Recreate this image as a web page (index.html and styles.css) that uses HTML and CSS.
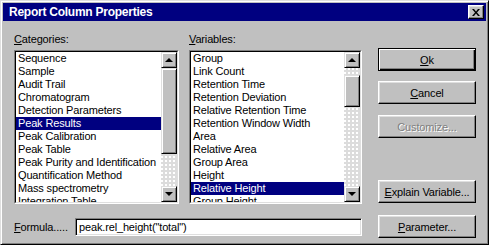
FILE: index.html
```html
<!DOCTYPE html>
<html>
<head>
<meta charset="utf-8">
<link rel="stylesheet" href="styles.css">
</head>
<body>
<div class="window">
  <div class="titlebar">
    <span class="title">Report Column Properties</span>
    <span class="close"><svg width="8" height="7" viewBox="0 0 8 7"><path d="M0 0h2l2 2.5L6 0h2L5 3.5 8 7H6L4 4.5 2 7H0l3-3.5z" fill="#000"/></svg></span>
  </div>
  <div class="main">
    <div class="panes">
      <div class="lists">
        <div class="group cat">
          <div class="label"><u>C</u>ategories:</div>
          <div class="listbox"><div class="lb-inner">
            <div class="items">
              <div class="item">Sequence</div>
              <div class="item">Sample</div>
              <div class="item">Audit Trail</div>
              <div class="item">Chromatogram</div>
              <div class="item">Detection Parameters</div>
              <div class="item sel">Peak Results</div>
              <div class="item">Peak Calibration</div>
              <div class="item">Peak Table</div>
              <div class="item">Peak Purity and Identification</div>
              <div class="item">Quantification Method</div>
              <div class="item">Mass spectrometry</div>
              <div class="item">Integration Table</div>
            </div>
            <div class="scrollbar">
              <div class="sbtn"><span class="arrow up"></span></div>
              <div class="thumb cat-thumb"></div>
              <div class="track"></div>
              <div class="sbtn"><span class="arrow down"></span></div>
            </div>
          </div></div>
        </div>
        <div class="group var">
          <div class="label"><u>V</u>ariables:</div>
          <div class="listbox"><div class="lb-inner">
            <div class="items">
              <div class="item">Group</div>
              <div class="item">Link Count</div>
              <div class="item">Retention Time</div>
              <div class="item">Retention Deviation</div>
              <div class="item">Relative Retention Time</div>
              <div class="item">Retention Window Width</div>
              <div class="item">Area</div>
              <div class="item">Relative Area</div>
              <div class="item">Group Area</div>
              <div class="item">Height</div>
              <div class="item sel">Relative Height</div>
              <div class="item">Group Height</div>
            </div>
            <div class="scrollbar">
              <div class="sbtn"><span class="arrow up"></span></div>
              <div class="track pre"></div>
              <div class="thumb var-thumb"></div>
              <div class="track"></div>
              <div class="sbtn"><span class="arrow down"></span></div>
            </div>
          </div></div>
        </div>
      </div>
      <div class="formula">
        <span class="flabel"><u>F</u>ormula.....</span>
        <div class="input">peak.rel_height("total")</div>
      </div>
    </div>
    <div class="buttons">
      <div class="btn default"><span><u>O</u>k</span></div>
      <div class="btn b-cancel"><span><u>C</u>ancel</span></div>
      <div class="btn b-cust disabled"><span>Customize...</span></div>
      <div class="btn b-explain"><span><u>E</u>xplain Variable...</span></div>
      <div class="btn b-param"><span><u>P</u>arameter...</span></div>
    </div>
  </div>
</div>
</body>
</html>
```
FILE: styles.css
```css
* { box-sizing: border-box; }
html, body { margin: 0; padding: 0; }
body {
  width: 489px; height: 245px; overflow: hidden;
  background: #c0c0c0;
  font-family: "Liberation Sans", Arial, sans-serif;
  font-size: 11px; color: #000;
  letter-spacing: -0.15px;
}
u { text-decoration: underline; text-underline-offset: 1px; }
.window {
  width: 489px; height: 245px;
  background: #c0c0c0;
  border: 1px solid; border-color: #dfdfdf #000 #000 #dfdfdf;
  box-shadow: inset 1px 1px #fff, inset -1px -1px #808080;
  padding: 2px;
  display: flex; flex-direction: column;
}
.titlebar {
  height: 18px; flex: none;
  background: #000080; color: #fff;
  display: flex; align-items: center; justify-content: space-between;
  padding: 0 2px 0 6px;
}
.title { font-weight: bold; font-size: 12px; letter-spacing: -0.25px; }
.close {
  width: 16px; height: 14px;
  background: #c0c0c0;
  border: 1px solid; border-color: #fff #000 #000 #fff;
  box-shadow: inset -1px -1px #808080, inset 1px 1px #dfdfdf;
  display: flex; align-items: center; justify-content: center;
}
.main { display: flex; padding: 12px 0 0 11px; }
.panes { display: flex; flex-direction: column; }
.lists { display: flex; gap: 10px; }
.group { display: flex; flex-direction: column; }
.cat { width: 165px; }
.var { width: 173px; }
.label { height: 13px; line-height: 13px; margin-bottom: 4px; }
.listbox {
  height: 154px;
  border: 1px solid; border-color: #808080 #fff #fff #808080;
}
.lb-inner {
  height: 100%;
  border: 1px solid; border-color: #000 #dfdfdf #dfdfdf #000;
  background: #fff;
  display: flex;
}
.items { flex: 1; overflow: hidden; }
.item { height: 13px; line-height: 13px; padding-left: 2px; white-space: nowrap; }
.item.sel { background: #000080; color: #fff; }
.scrollbar {
  width: 16px; flex: none;
  display: flex; flex-direction: column;
  background-color: #dcdcdc;
  background-image: radial-gradient(circle at 1px 1px, #fff 0.8px, transparent 1px);
  background-size: 4px 4px;
}
.sbtn, .thumb {
  flex: none;
  background: #c0c0c0;
  border: 1px solid; border-color: #dfdfdf #000 #000 #dfdfdf;
  box-shadow: inset 1px 1px #fff, inset -1px -1px #808080;
}
.sbtn { height: 16px; display: flex; align-items: center; justify-content: center; }
.track { flex: 1; }
.track.pre { flex: none; height: 7px; }
.cat-thumb { height: 86px; }
.var-thumb { height: 32px; }
.arrow { width: 0; height: 0; border-left: 4px solid transparent; border-right: 4px solid transparent; }
.arrow.up { border-bottom: 4px solid #000; }
.arrow.down { border-top: 4px solid #000; }
.formula { display: flex; align-items: center; margin-top: 14px; }
.flabel { width: 61px; flex: none; }
.input {
  width: 287px; height: 18px;
  border: 1px solid; border-color: #808080 #fff #fff #808080;
  box-shadow: inset 1px 1px #000, inset -1px -1px #dfdfdf;
  background: #fff;
  padding: 0 3px; line-height: 16px; white-space: nowrap;
}
.buttons { display: flex; flex-direction: column; margin-left: 16px; margin-top: 15px; }
.btn {
  width: 98px; height: 23px;
  background: #c0c0c0;
  border: 1px solid; border-color: #fff #000 #000 #fff;
  box-shadow: inset -1px -1px #808080, inset 1px 1px #dfdfdf;
  display: flex; align-items: center; justify-content: center;
}
.btn.default {
  border-color: #000;
  box-shadow: inset 1px 1px #fff, inset -1px -1px #000, inset -2px -2px #808080;
}
.b-cancel { margin-top: 10px; }
.b-cust { margin-top: 11px; }
.b-explain { margin-top: 42px; }
.b-param { margin-top: 12px; }
.disabled { color: #808080; text-shadow: 1px 1px 0 #fff; }
```
